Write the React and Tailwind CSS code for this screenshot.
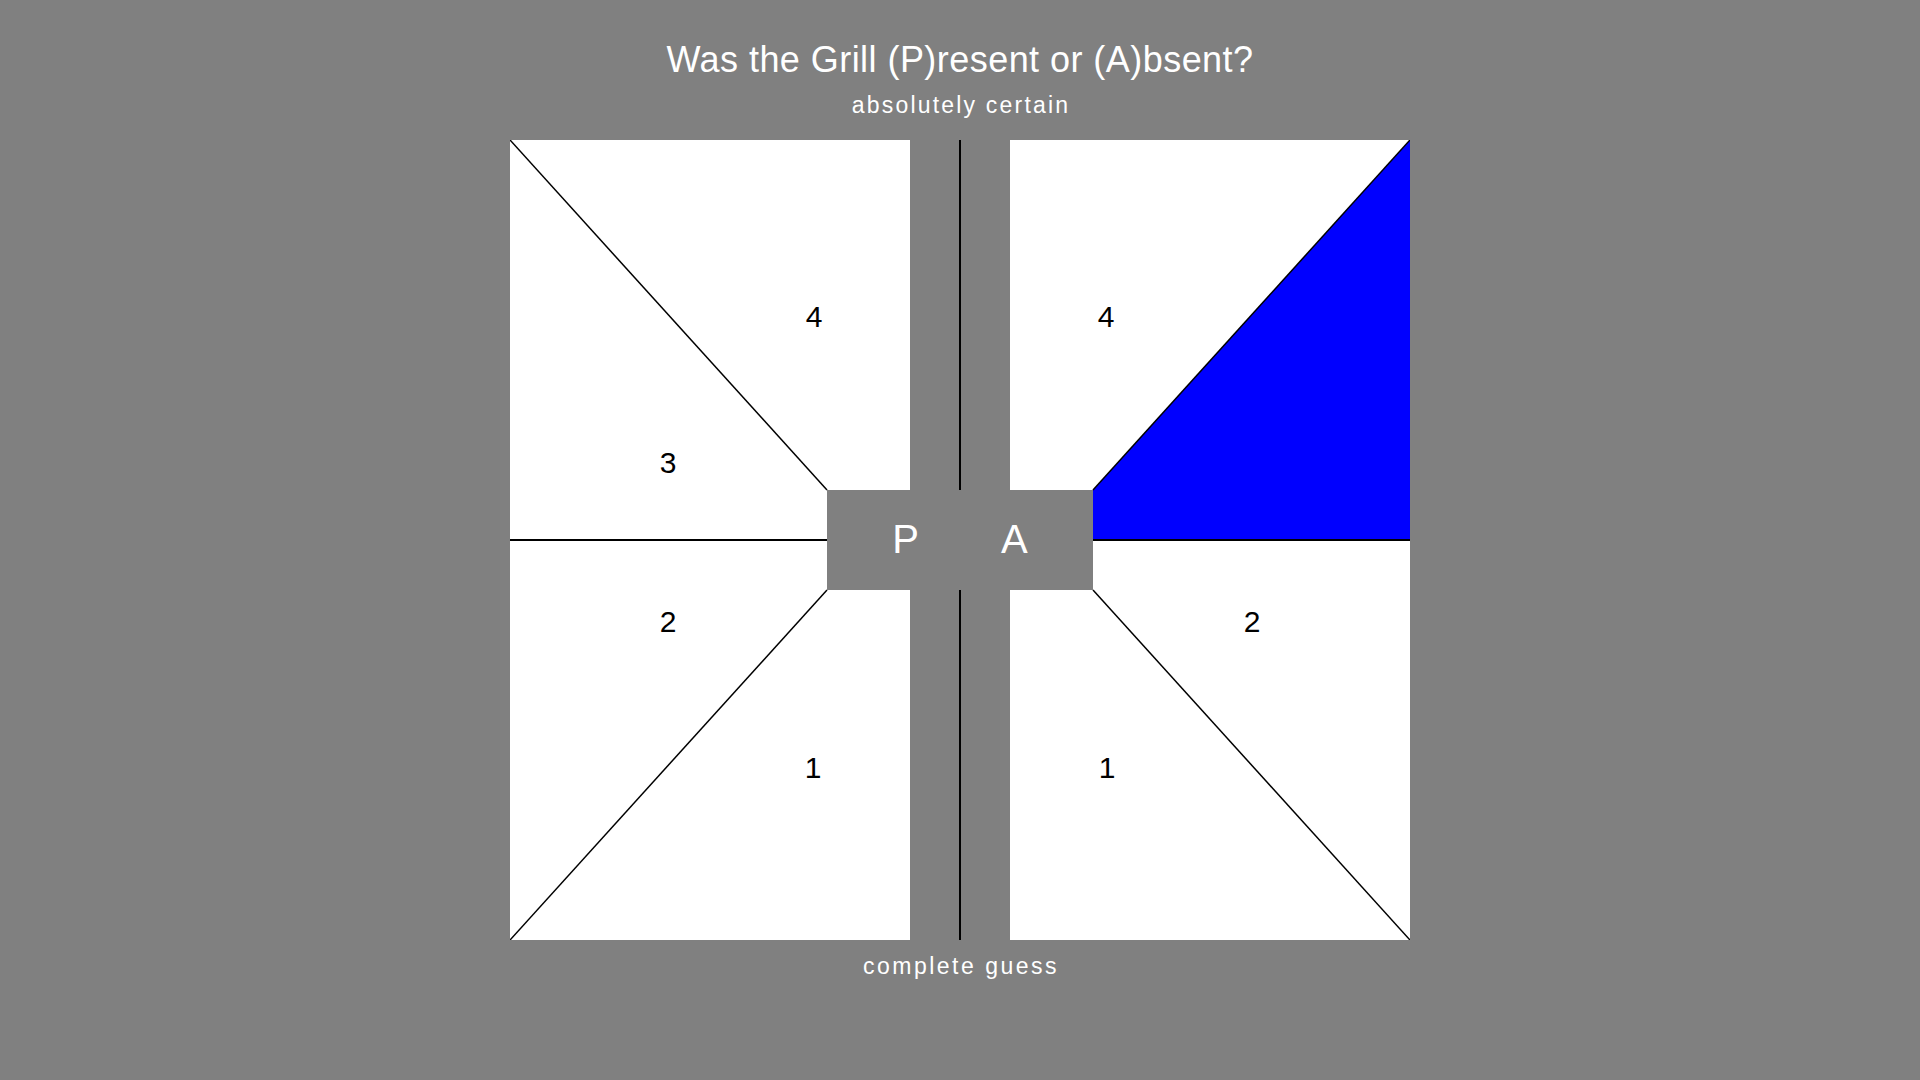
import React from "react";

// panel geometry, in panel pixels (each panel is 400 x 800)
const LEFT_LABELS = [
  { n: "4", x: 304, y: 177 },
  { n: "3", x: 158, y: 323 },
  { n: "2", x: 158, y: 482 },
  { n: "1", x: 303, y: 628 },
];

const RIGHT_LABELS = [
  { n: "4", x: 96, y: 177 },
  { n: "2", x: 242, y: 482 },
  { n: "1", x: 97, y: 628 },
];

function Label({ n, x, y }) {
  return (
    <span
      className="absolute -translate-x-1/2 -translate-y-1/2 text-[30px] leading-[30px] text-black"
      style={{ left: x, top: y }}
    >
      {n}
    </span>
  );
}

function LeftPanel() {
  return (
    <div className="relative w-[400px] h-[800px] bg-white">
      <svg className="absolute inset-0" width="400" height="800" viewBox="0 0 400 800">
        <line x1="0" y1="0" x2="317" y2="350" stroke="#000" strokeWidth="1.5" />
        <line x1="0" y1="400" x2="317" y2="400" stroke="#000" strokeWidth="2" />
        <line x1="317" y1="450" x2="0" y2="800" stroke="#000" strokeWidth="1.5" />
      </svg>
      {LEFT_LABELS.map((l) => (
        <Label key={l.n} {...l} />
      ))}
    </div>
  );
}

function RightPanel() {
  return (
    <div className="relative w-[400px] h-[800px] bg-white">
      <svg className="absolute inset-0" width="400" height="800" viewBox="0 0 400 800">
        <polygon points="83,350 400,0 400,400 83,400" fill="#0000ff" />
        <line x1="83" y1="350" x2="400" y2="0" stroke="#000" strokeWidth="1.5" />
        <line x1="83" y1="400" x2="400" y2="400" stroke="#000" strokeWidth="2" />
        <line x1="83" y1="450" x2="400" y2="800" stroke="#000" strokeWidth="1.5" />
      </svg>
      {RIGHT_LABELS.map((l) => (
        <Label key={l.n} {...l} />
      ))}
    </div>
  );
}

export default function App() {
  return (
    <div className="min-h-screen w-full bg-[#808080] flex flex-col items-center pt-[42px] font-['Liberation_Sans',Arial,sans-serif] text-white">
      <h1 className="text-[36px] leading-[36px] tracking-[0.45px] font-normal">
        Was the Grill (P)resent or (A)bsent?
      </h1>
      <div className="mt-[16px] text-[23px] leading-[23px] tracking-[2.2px] pl-[2px]">
        absolutely certain
      </div>

      <div className="relative mt-[23px] flex">
        <LeftPanel />
        <div className="w-[100px] h-[800px] flex justify-center">
          <div className="w-[2px] h-full bg-black" />
        </div>
        <RightPanel />

        <div className="absolute left-[317px] top-[350px] w-[266px] h-[100px] bg-[#808080] flex items-center justify-center gap-[82px] pb-[2px] text-[40px] leading-[40px]">
          <span>P</span>
          <span>A</span>
        </div>
      </div>

      <div className="mt-[15px] text-[23px] leading-[23px] tracking-[2.5px] pl-[2px]">
        complete guess
      </div>
    </div>
  );
}
